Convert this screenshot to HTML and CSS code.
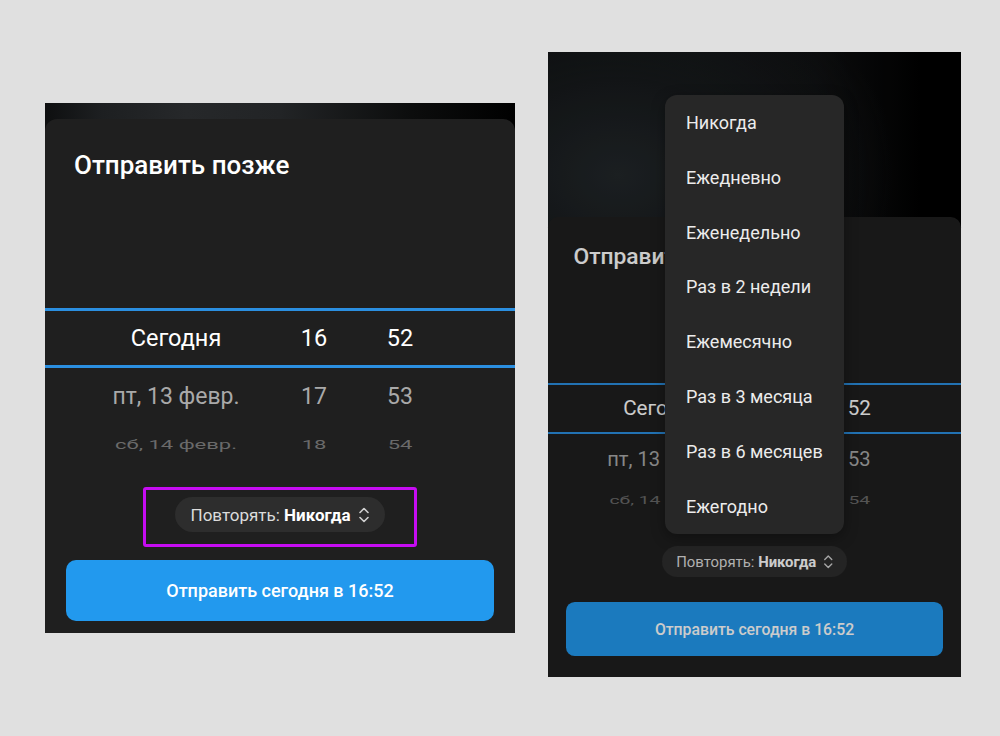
FILE: index.html
```html
<!DOCTYPE html>
<html lang="ru">
<head>
<meta charset="utf-8">
<title>Отправить позже</title>
<link rel="stylesheet" href="styles.css">
</head>
<body>
<div class="page">
  <div class="phone phone--left">
    <div class="screen screen--left">
      <div class="sheet">
        <h1 class="sheet__title">Отправить позже</h1>
        <div class="picker">
          <div class="picker__row picker__row--sel"><span>Сегодня</span><span>16</span><span>52</span></div>
          <div class="picker__row picker__row--near"><span>пт, 13 февр.</span><span>17</span><span>53</span></div>
          <div class="picker__row picker__row--far"><span>сб, 14 февр.</span><span>18</span><span>54</span></div>
        </div>
        <div class="repeat repeat--marked">
          <button class="pill"><span class="pill__label">Повторять: <b>Никогда</b></span>
            <svg class="pill__icon" width="12" height="20" viewBox="0 0 12 20"><path d="M2 7.5 L6 3.5 L10 7.5 M2 12.5 L6 16.5 L10 12.5" fill="none" stroke="#d0d0d0" stroke-width="1.6" stroke-linecap="round" stroke-linejoin="round"/></svg>
          </button>
        </div>
        <button class="send">Отправить сегодня в 16:52</button>
      </div>
    </div>
  </div>

  <div class="phone phone--right">
    <div class="screen screen--right">
      <div class="sheet">
        <h1 class="sheet__title">Отправить позже</h1>
        <div class="picker">
          <div class="picker__row picker__row--sel"><span>Сегодня</span><span>16</span><span>52</span></div>
          <div class="picker__row picker__row--near"><span>пт, 13 февр.</span><span>17</span><span>53</span></div>
          <div class="picker__row picker__row--far"><span>сб, 14 февр.</span><span>18</span><span>54</span></div>
        </div>
        <div class="repeat">
          <button class="pill"><span class="pill__label">Повторять: <b>Никогда</b></span>
            <svg class="pill__icon" width="12" height="20" viewBox="0 0 12 20"><path d="M2 7.5 L6 3.5 L10 7.5 M2 12.5 L6 16.5 L10 12.5" fill="none" stroke="#d0d0d0" stroke-width="1.6" stroke-linecap="round" stroke-linejoin="round"/></svg>
          </button>
        </div>
        <button class="send">Отправить сегодня в 16:52</button>
      </div>
    </div>
    <ul class="menu">
      <li>Никогда</li>
      <li>Ежедневно</li>
      <li>Еженедельно</li>
      <li>Раз в 2 недели</li>
      <li>Ежемесячно</li>
      <li>Раз в 3 месяца</li>
      <li>Раз в 6 месяцев</li>
      <li>Ежегодно</li>
    </ul>
  </div>
</div>
</body>
</html>
```

FILE: styles.css
```css
html, body {
  margin: 0;
  background: #e0e0e0;
  font-family: Roboto, "Noto Sans", sans-serif;
}

.page {
  display: flex;
  align-items: flex-start;
  gap: 33px;
  padding-left: 45px;
  width: 1000px;
  height: 736px;
  box-sizing: border-box;
}

.phone {
  position: relative;
}

.phone--left {
  margin-top: 103px;
}

.phone--right {
  margin-top: 52px;
}

.screen {
  position: relative;
  width: 470px;
  display: flex;
  flex-direction: column;
}

.screen--left {
  padding-top: 16px;
  background: linear-gradient(90deg, #0e0f10 0%, #1d1f21 12%, #26282a 30%, #222426 50%, #0c0d0d 78%, #000 100%);
}

.screen--right {
  zoom: 0.877;
  width: 471px;
  padding-top: 188px;
  background:
    radial-gradient(ellipse 320px 240px at 80px 140px, #22272a 0%, #171a1c 45%, rgba(10, 11, 12, 0) 100%),
    linear-gradient(90deg, #0c0d0e 0%, #121416 35%, #0e0f10 65%, #000 92%);
}

.screen--right::after {
  content: "";
  position: absolute;
  inset: 0;
  background: rgba(0, 0, 0, 0.2);
}

.sheet {
  background: #1f1f1f;
  border-radius: 12px 12px 0 0;
  padding: 31px 21px 12px;
  display: flex;
  flex-direction: column;
}

.screen--right .sheet {
  padding-bottom: 24px;
}

.sheet__title {
  margin: 0;
  padding-left: 8px;
  font-size: 26px;
  font-weight: 500;
  line-height: 30px;
  color: #ffffff;
}

.picker {
  margin: 128px -21px 0;
}

.picker__row {
  display: grid;
  grid-template-columns: 190px 86px 86px;
  padding-left: 36px;
  align-items: center;
  justify-items: center;
  font-size: 23px;
}

.picker__row--sel {
  height: 54px;
  border-top: 3px solid #2b8fe0;
  border-bottom: 3px solid #2b8fe0;
  color: #ffffff;
  font-size: 23.5px;
}

.picker__row--near {
  height: 56px;
  color: #a9a9a9;
}

.picker__row--far {
  height: 40px;
  color: #6a6a6a;
  font-size: 22px;
}

.picker__row--far span {
  display: inline-block;
  transform: scaleY(0.55);
}

.repeat {
  margin: 23px auto 0;
  width: 274px;
  height: 60px;
  box-sizing: border-box;
  border: 3px solid transparent;
  border-radius: 3px;
  padding-top: 7px;
  display: flex;
  justify-content: center;
  align-items: flex-start;
}

.repeat--marked {
  border-color: #c60cf2;
}

.pill {
  height: 35px;
  display: inline-flex;
  align-items: center;
  gap: 8px;
  padding: 0 15px 0 16px;
  border: 0;
  border-radius: 18px;
  background: #2d2d2d;
  color: #dcdcdc;
  font-family: inherit;
  font-size: 17px;
}

.pill b {
  font-weight: 700;
  color: #ffffff;
}

.pill__icon {
  display: block;
}

.send {
  margin-top: 13px;
  height: 61px;
  border: 0;
  border-radius: 10px;
  background: #2299ee;
  color: #ffffff;
  font-family: inherit;
  font-size: 18px;
  font-weight: 500;
}

.menu {
  position: absolute;
  left: 117px;
  top: 43px;
  width: 179px;
  margin: 0;
  padding: 1px 0 0;
  list-style: none;
  background: #272727;
  border-radius: 12px;
  box-shadow: 0 4px 14px rgba(0, 0, 0, 0.35);
  z-index: 2;
}

.menu li {
  height: 54.8px;
  line-height: 54.8px;
  padding-left: 21px;
  font-size: 18px;
  color: #ececec;
}
```
